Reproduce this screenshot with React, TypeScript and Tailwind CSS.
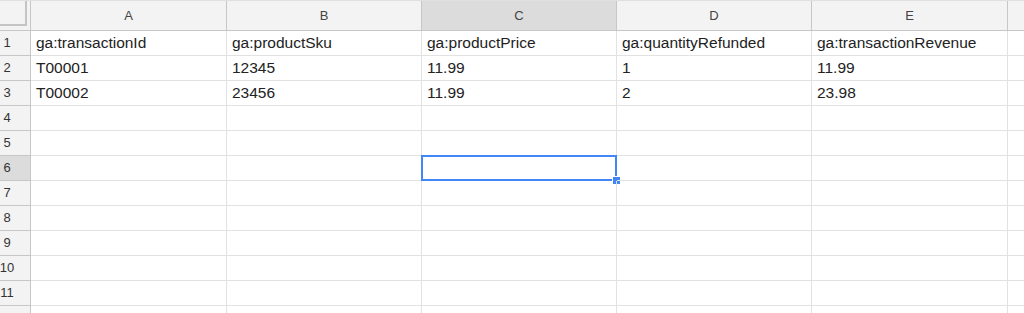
import React from 'react';

const columns = ['A', 'B', 'C', 'D', 'E', ''];
const widths = ['w-[196px]', 'w-[195px]', 'w-[195px]', 'w-[195px]', 'w-[196px]', 'w-[40px]'];

const data: string[][] = [
  ['ga:transactionId', 'ga:productSku', 'ga:productPrice', 'ga:quantityRefunded', 'ga:transactionRevenue', ''],
  ['T00001', '12345', '11.99', '1', '11.99', ''],
  ['T00002', '23456', '11.99', '2', '23.98', ''],
];

const ROWS = 12;
const SELECTED_COL = 2;
const SELECTED_ROW = 6;

export default function App() {
  return (
    <div className="w-[1024px] h-[313px] overflow-hidden bg-white font-['Liberation_Sans',Arial,sans-serif] text-[15.5px] text-[#222]">
      {/* column header row */}
      <div className="flex h-[31px] border-t border-[#e0e0e0]">
        <div className="w-[31px] shrink-0 bg-[#f3f3f3] border-r border-b border-[#c7c7c7] relative">
          <div className="absolute left-0 top-0 w-[27px] h-[25px] border-r-2 border-b-2 border-[#c4c4c4]" />
        </div>
        {columns.map((c, i) => (
          <div
            key={i}
            className={`${widths[i]} shrink-0 border-r border-b border-[#c7c7c7] flex items-center justify-center text-[13px] text-[#444] ${
              i === SELECTED_COL ? 'bg-[#dcdcdc]' : 'bg-[#f3f3f3]'
            }`}
          >
            {c}
          </div>
        ))}
      </div>

      {Array.from({ length: ROWS }).map((_, r) => {
        const rowNum = r + 1;
        const values = data[r] || [];
        return (
          <div key={r} className="flex h-[25px]">
            <div
              className={`w-[31px] shrink-0 border-r border-b border-[#c7c7c7] flex items-center text-[13px] text-[#333] ${
                rowNum === SELECTED_ROW ? 'bg-[#dcdcdc]' : 'bg-[#f3f3f3]'
              }`}
            >
              <div className="w-[14px] flex justify-center whitespace-nowrap">{rowNum}</div>
            </div>
            {columns.map((_, i) => {
              const selected = i === SELECTED_COL && rowNum === SELECTED_ROW;
              return (
                <div
                  key={i}
                  className={`${widths[i]} shrink-0 border-r border-b border-[#e2e2e2] relative flex items-center pl-[5px] whitespace-nowrap overflow-visible`}
                >
                  {values[i] || ''}
                  {selected && (
                    <>
                      <div className="absolute left-[-1px] top-[-1px] right-[-1px] bottom-[-1px] border-2 border-[#4285f4]" />
                      <div className="absolute right-[-5px] bottom-[-5px] w-[9px] h-[9px] bg-[#4285f4] border border-white" />
                    </>
                  )}
                </div>
              );
            })}
          </div>
        );
      })}
    </div>
  );
}
